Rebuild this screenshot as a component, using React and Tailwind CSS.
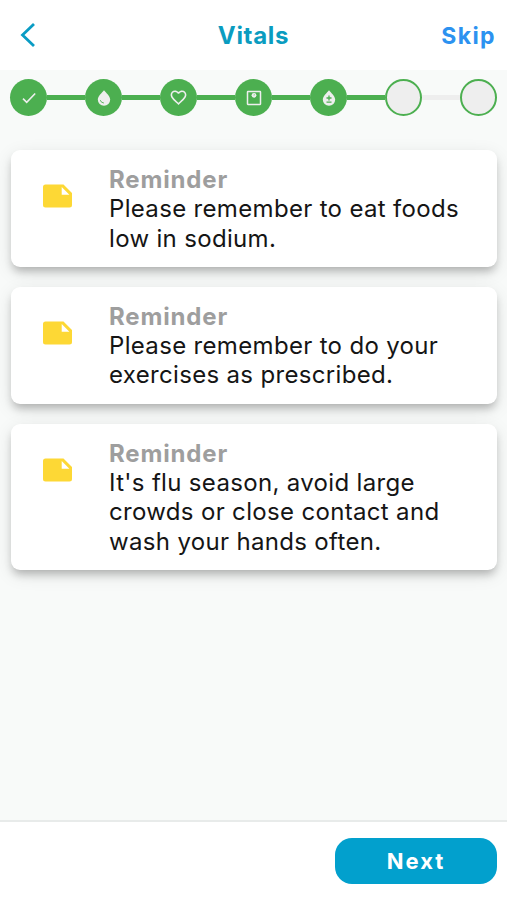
import React from "react";

const CheckIcon = () => (
  <svg viewBox="0 0 18 18" className="size-[18px]" fill="none" stroke="#eeeeee" strokeWidth="1.6">
    <path d="M3 9.6 L6.7 13.3 L15.2 4.5" />
  </svg>
);

const DropIcon = () => (
  <svg viewBox="0 0 18 18" className="size-[18px]">
    <path d="M9 1.2 C11 3.6 15.2 7.3 15.2 10.6 A6.2 6.2 0 0 1 2.8 10.6 C2.8 7.3 7 3.6 9 1.2 Z" fill="#eeeeee" />
    <path d="M5.3 11.2 A3.9 3.9 0 0 0 8.9 14" fill="none" stroke="#4caf50" strokeWidth="0.9" />
  </svg>
);

const HeartIcon = () => (
  <svg viewBox="0 0 24 24" className="size-[19px]" fill="#eeeeee">
    <path d="M16.5 3c-1.74 0-3.41.81-4.5 2.09C10.91 3.81 9.24 3 7.5 3 4.42 3 2 5.42 2 8.5c0 3.78 3.4 6.86 8.55 11.54L12 21.35l1.45-1.32C18.6 15.36 22 12.28 22 8.5 22 5.42 19.58 3 16.5 3zm-4.4 15.55l-.1.1-.1-.1C7.14 14.24 4 11.39 4 8.5 4 6.5 5.5 5 7.5 5c1.54 0 3.04.99 3.57 2.36h1.87C13.46 5.99 14.96 5 16.5 5c2 0 3.5 1.5 3.5 3.5 0 2.89-3.14 5.74-7.9 10.05z" />
  </svg>
);

const ScaleIcon = () => (
  <svg viewBox="0 0 18 18" className="size-[18px]" fill="none">
    <rect x="2.5" y="2.5" width="13" height="13" rx="0.4" stroke="#eeeeee" strokeWidth="1.5" />
    <circle cx="9" cy="6.3" r="2.4" fill="#eeeeee" />
    <path d="M9 6.6 L9.4 5.2" stroke="#4caf50" strokeWidth="0.6" />
  </svg>
);

const PlusMinusDropIcon = () => (
  <svg viewBox="0 0 18 18" className="size-[18px]">
    <path d="M9 1.2 C11 3.6 15.2 7.3 15.2 10.6 A6.2 6.2 0 0 1 2.8 10.6 C2.8 7.3 7 3.6 9 1.2 Z" fill="#eeeeee" />
    <path d="M9 6.5 V11.5 M6.5 9 H11.5 M6.5 13.2 H11.5" fill="none" stroke="#4caf50" strokeWidth="1.3" />
  </svg>
);

const steps = [CheckIcon, DropIcon, HeartIcon, ScaleIcon, PlusMinusDropIcon, null, null];

function Stepper() {
  return (
    <div className="flex h-[37px] items-center">
      {steps.map((Icon, i) => (
        <React.Fragment key={i}>
          {i > 0 && <div className={i < 6 ? "h-[5px] flex-1 bg-[#4caf50]" : "h-[5px] flex-1 bg-[#eeeeee]"} />}
          <div
            className={
              Icon
                ? "flex size-[37px] shrink-0 items-center justify-center rounded-full bg-[#4caf50]"
                : "size-[37px] shrink-0 rounded-full border-2 border-[#4caf50] bg-[#eeeeee]"
            }
          >
            {Icon && <Icon />}
          </div>
        </React.Fragment>
      ))}
    </div>
  );
}

const NoteIcon = () => (
  <svg viewBox="0 0 29 24" className="mt-[19px] ml-[32px] h-[24px] w-[29px] shrink-0">
    <path d="M2.5 0.5 H20.5 L29 9 V21 A2.5 2.5 0 0 1 26.5 23.5 H2.5 A2.5 2.5 0 0 1 0 21 V3 A2.5 2.5 0 0 1 2.5 0.5 Z M18.7 3 V10.7 H26.4 Z" fill="#fdd835" fillRule="evenodd" />
  </svg>
);

const reminders = [
  ["Please remember to eat foods", "low in sodium."],
  ["Please remember to do your", "exercises as prescribed."],
  ["It's flu season, avoid large", "crowds or close contact and", "wash your hands often."],
];

function Reminder({ lines }) {
  return (
    <article className="flex rounded-[9px] bg-white pt-[15px] pb-[14px] shadow-[0_6px_8px_-2px_rgba(0,0,0,0.24),0_5px_18px_rgba(0,0,0,0.1)]">
      <NoteIcon />
      <div className="ml-[37.5px] text-[24px] leading-[29.3px] whitespace-nowrap">
        <h2 className="font-bold tracking-[0.85px] text-[#9e9e9e]">Reminder</h2>
        {lines.map((line) => (
          <p key={line} className="tracking-[0.33px] text-[#151515]">{line}</p>
        ))}
      </div>
    </article>
  );
}

export default function App() {
  return (
    <div className="flex h-[900px] w-[507px] flex-col overflow-hidden bg-[#f8faf9] font-['Inter',sans-serif]">
      <header className="grid h-[70px] shrink-0 grid-cols-3 items-center bg-white">
        <button className="pl-[20px]" aria-label="Back">
          <svg viewBox="0 0 16 26" className="h-[26px] w-[16px]" fill="none" stroke="#0a9cc4" strokeWidth="2.8">
            <path d="M14 2 L2.5 13 L14 24" />
          </svg>
        </button>
        <h1 className="pt-[2px] text-center text-[24px] font-bold tracking-[0.7px] text-[#0a9cc0]">Vitals</h1>
        <button className="pt-[2px] pr-[11px] text-right text-[23px] font-bold tracking-[1.4px] text-[#2c92f0]">Skip</button>
      </header>
      <main className="flex flex-1 flex-col px-[10px] pt-[9px]">
        <Stepper />
        <section className="mt-[34px] ml-[0.5px] flex flex-col gap-[20px]">
          {reminders.map((lines) => (
            <Reminder key={lines[0]} lines={lines} />
          ))}
        </section>
      </main>
      <footer className="flex h-[80px] shrink-0 justify-end border-t-2 border-[#e8ebea] bg-white pt-[16px] pr-[10px]">
        <button className="h-[46px] w-[162px] rounded-[17px] bg-[#02a0cd] text-[22px] font-bold tracking-[2px] text-white">Next</button>
      </footer>
    </div>
  );
}
